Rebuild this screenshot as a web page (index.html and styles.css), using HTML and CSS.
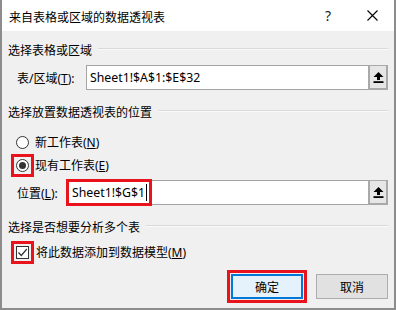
FILE: index.html
```html
<!DOCTYPE html>
<html>
	<head>
		<meta charset="utf-8">
		<link rel="stylesheet" href="styles.css">
	</head>
	<body>
		<div class="dialog">
			<div class="titlebar">
				<span class="title">来自表格或区域的数据透视表</span>
				<span class="help">?</span>
				<span class="close">
					<svg width="11" height="11" viewBox="0 0 11 11"><path d="M0.5 0.5 L10.5 10.5 M10.5 0.5 L0.5 10.5" stroke="#000" stroke-width="1.1" fill="none"/></svg>
				</span>
			</div>
			<div class="content">
				<div class="group-title first"><span>选择表格或区域</span></div>
				<div class="field-row">
					<label class="field-label range-label">表/区域(<u>T</u>):</label>
					<div class="ref-input">
						<span class="ref-text">Sheet1!$A$1:$E$32</span>
						<span class="collapse-btn">
							<svg width="11" height="11" viewBox="0 0 11 11"><path d="M5.5 0 L10.5 5 L7 5 L7 8 L4 8 L4 5 L0.5 5 Z" fill="#000"/><rect x="0.5" y="9.2" width="10" height="1.8" fill="#000"/></svg>
						</span>
					</div>
				</div>

				<div class="group-title"><span>选择放置数据透视表的位置</span></div>
				<div class="option-row first-option">
					<span class="mark"><span class="radio"></span></span>
					<span>新工作表(<u>N</u>)</span>
				</div>
				<div class="option-row">
					<span class="mark marked"><span class="radio checked"></span></span>
					<span>现有工作表(<u>E</u>)</span>
				</div>
				<div class="field-row place-row">
					<label class="field-label">位置(<u>L</u>):</label>
					<div class="ref-input">
						<span class="ref-text marked-text">Sheet1!$G$1<span class="caret"></span></span>
						<span class="collapse-btn">
							<svg width="11" height="11" viewBox="0 0 11 11"><path d="M5.5 0 L10.5 5 L7 5 L7 8 L4 8 L4 5 L0.5 5 Z" fill="#000"/><rect x="0.5" y="9.2" width="10" height="1.8" fill="#000"/></svg>
						</span>
					</div>
				</div>

				<div class="group-title"><span>选择是否想要分析多个表</span></div>
				<div class="option-row check-row">
					<span class="mark marked">
						<span class="checkbox">
							<svg width="11" height="11" viewBox="0 0 11 11"><path d="M1.5 5.5 L4.3 8.5 L9.8 2" stroke="#333" stroke-width="1.2" fill="none"/></svg>
						</span>
					</span>
					<span>将此数据添加到数据模型(<u>M</u>)</span>
				</div>

				<div class="actions">
					<button class="btn primary">确定</button>
					<button class="btn">取消</button>
				</div>
			</div>
		</div>
	</body>
</html>
```

FILE: styles.css
```css
:root {
	--face: #f0f0f0;
	--mark: #e8131d;
	--line: #dadada;
}
html, body {
	margin: 0;
	padding: 0;
	background: var(--face);
}
body {
	font-family: "Noto Sans", "Noto Sans CJK SC", sans-serif;
	font-size: 12px;
	color: #000;
}
u {
	text-underline-offset: 1px;
}

.dialog {
	width: 396px;
	height: 310px;
	box-sizing: border-box;
	border: 2px solid #8c8c8c;
	border-top: 0;
	background: var(--face);
	display: flex;
	flex-direction: column;
}

.titlebar {
	height: 31px;
	flex: none;
	background: #fff;
	display: flex;
	align-items: center;
	padding-left: 7px;
}
.title {
	flex: 1;
	font-family: "Noto Sans CJK SC", sans-serif;
	font-size: 12px;
	padding-top: 1px;
}
.help, .close {
	width: 44px;
	display: flex;
	justify-content: center;
	align-items: center;
}
.help {
	font-size: 14px;
	color: #222;
}
.close svg {
	display: block;
}

.content {
	padding: 0 6px;
	display: flex;
	flex-direction: column;
}

.group-title {
	display: flex;
	align-items: center;
	height: 16px;
	margin-top: 13px;
	font-family: "Noto Sans CJK SC", sans-serif;
}
.group-title.first {
	margin-top: 10px;
}
.group-title::after {
	content: "";
	flex: 1;
	height: 1px;
	background: var(--line);
	border-bottom: 1px solid #fafafa;
	margin-left: 6px;
}

.field-row {
	display: flex;
	align-items: center;
	height: 25px;
	margin-top: 8px;
	padding-left: 9px;
}
.field-label {
	font-family: "Noto Sans", "Noto Sans CJK SC", sans-serif;
	width: 51px;
	flex: none;
}
.range-label {
	width: 69px;
}
.place-row {
	margin-top: 5px;
}

.ref-input {
	flex: 1;
	height: 25px;
	box-sizing: border-box;
	border: 1px solid #a3a3a3;
	background: #fff;
	display: flex;
	align-items: center;
}
.ref-text {
	flex: 1;
	padding-left: 3px;
	font-size: 12.3px;
}
.marked-text {
	flex: none;
	height: 21px;
	line-height: 21px;
	padding: 0 2px 0 3px;
	outline: 3px solid var(--mark);
	display: flex;
	align-items: center;
}
.caret {
	width: 1px;
	height: 17px;
	background: #000;
	margin-left: 1px;
}
.collapse-btn {
	width: 20px;
	height: 25px;
	margin: -1px -1px -1px auto;
	box-sizing: border-box;
	border: 2px solid #a9a9a9;
	border-top-width: 1px;
	background: #e6e6e6;
	display: flex;
	justify-content: center;
	align-items: center;
	flex: none;
}
.collapse-btn svg {
	display: block;
}

.option-row {
	display: flex;
	align-items: center;
	height: 20px;
	margin-top: 3px;
	padding-left: 8px;
	gap: 6px;
	font-family: "Noto Sans", "Noto Sans CJK SC", sans-serif;
}
.first-option {
	margin-top: 13px;
}
.check-row {
	margin-top: 8px;
	gap: 7px;
}

.mark {
	width: 13px;
	height: 13px;
	flex: none;
}
.mark.marked {
	outline: 3px solid var(--mark);
	outline-offset: 2px;
}
.radio {
	display: block;
	width: 13px;
	height: 13px;
	box-sizing: border-box;
	border: 1px solid #333;
	border-radius: 50%;
	background: #fff;
	position: relative;
}
.radio.checked::after {
	content: "";
	position: absolute;
	left: 2px;
	top: 2px;
	width: 7px;
	height: 7px;
	border-radius: 50%;
	background: #333;
}
.checkbox {
	display: flex;
	width: 13px;
	height: 13px;
	box-sizing: border-box;
	border: 1px solid #333;
	background: #fff;
	justify-content: center;
	align-items: center;
}

.actions {
	display: flex;
	justify-content: flex-end;
	gap: 13px;
	margin-top: 12px;
}
.btn {
	width: 72px;
	height: 25px;
	box-sizing: border-box;
	border: 1px solid #adadad;
	background: #e1e1e1;
	font-family: "Noto Sans CJK SC", sans-serif;
	font-size: 12px;
	color: #000;
	padding: 0;
}
.btn.primary {
	border: 2px solid #0078d7;
	background: #e5f1fb;
	outline: 3px solid var(--mark);
	outline-offset: 1px;
}
```
